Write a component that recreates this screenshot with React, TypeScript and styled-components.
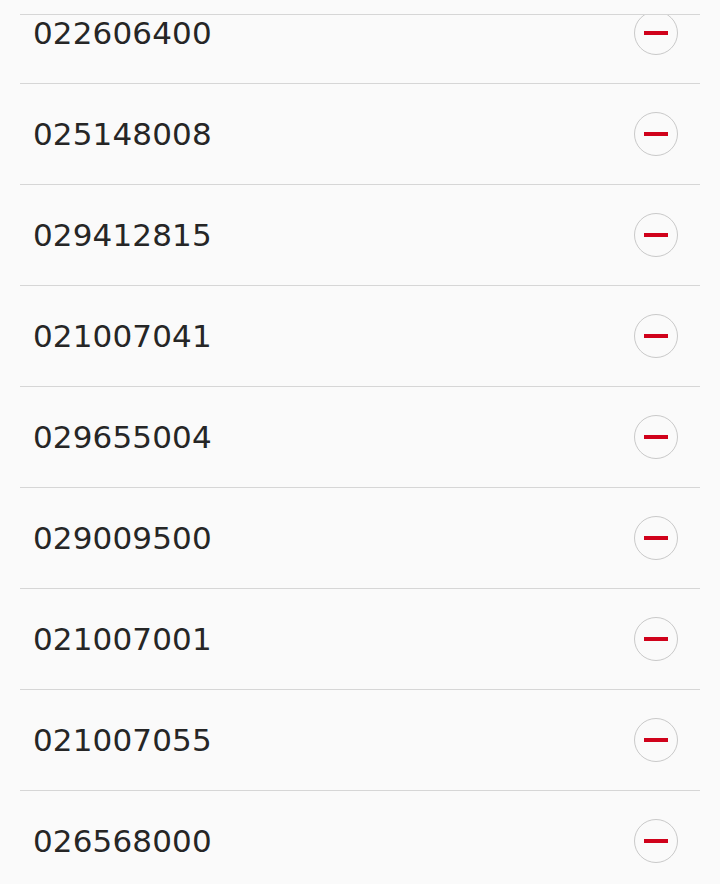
import { createGlobalStyle, styled } from 'styled-components';

const GlobalStyle = createGlobalStyle`
  html, body {
    margin: 0;
    padding: 0;
    background: #fafafa;
    height: 100%;
  }
  #root {
    height: 100%;
  }
`;

const Page = styled.div`
  box-sizing: border-box;
  height: 884px;
  padding: 14px 20px 0 20px;
  background: #fafafa;
  display: flex;
  flex-direction: column;
`;

const Viewport = styled.div`
  flex: 1;
  overflow: hidden;
  border-top: 1px solid #d6d6d6;
`;

const List = styled.ul<{ $offset: number }>`
  list-style: none;
  margin: ${({ $offset }) => `${-$offset}px`} 0 0 0;
  padding: 0;
  display: flex;
  flex-direction: column;
`;

const Row = styled.li`
  display: flex;
  flex-direction: row;
  align-items: center;
  justify-content: space-between;
  height: 100px;
  padding: 0 22px 0 13px;
  border-bottom: 1px solid #d6d6d6;
`;

const Number = styled.span`
  font-family: 'DejaVu Sans', sans-serif;
  font-size: 31px;
  letter-spacing: 0.15px;
  color: #262626;
`;

const RemoveButton = styled.button`
  box-sizing: border-box;
  width: 44px;
  height: 44px;
  border-radius: 50%;
  border: 1px solid #c9c9c9;
  background: transparent;
  display: flex;
  align-items: center;
  justify-content: center;
  padding: 0;
  cursor: pointer;
`;

const Minus = styled.span`
  display: block;
  width: 24px;
  height: 4px;
  background: #d0021b;
`;

const numbers = [
  '022606400',
  '025148008',
  '029412815',
  '021007041',
  '029655004',
  '029009500',
  '021007001',
  '021007055',
  '026568000',
];

export default function App() {
  return (
    <>
      <GlobalStyle />
      <Page>
        <Viewport>
          <List $offset={32}>
            {numbers.map((n) => (
              <Row key={n}>
                <Number>{n}</Number>
                <RemoveButton aria-label="Remove">
                  <Minus />
                </RemoveButton>
              </Row>
            ))}
          </List>
        </Viewport>
      </Page>
    </>
  );
}
